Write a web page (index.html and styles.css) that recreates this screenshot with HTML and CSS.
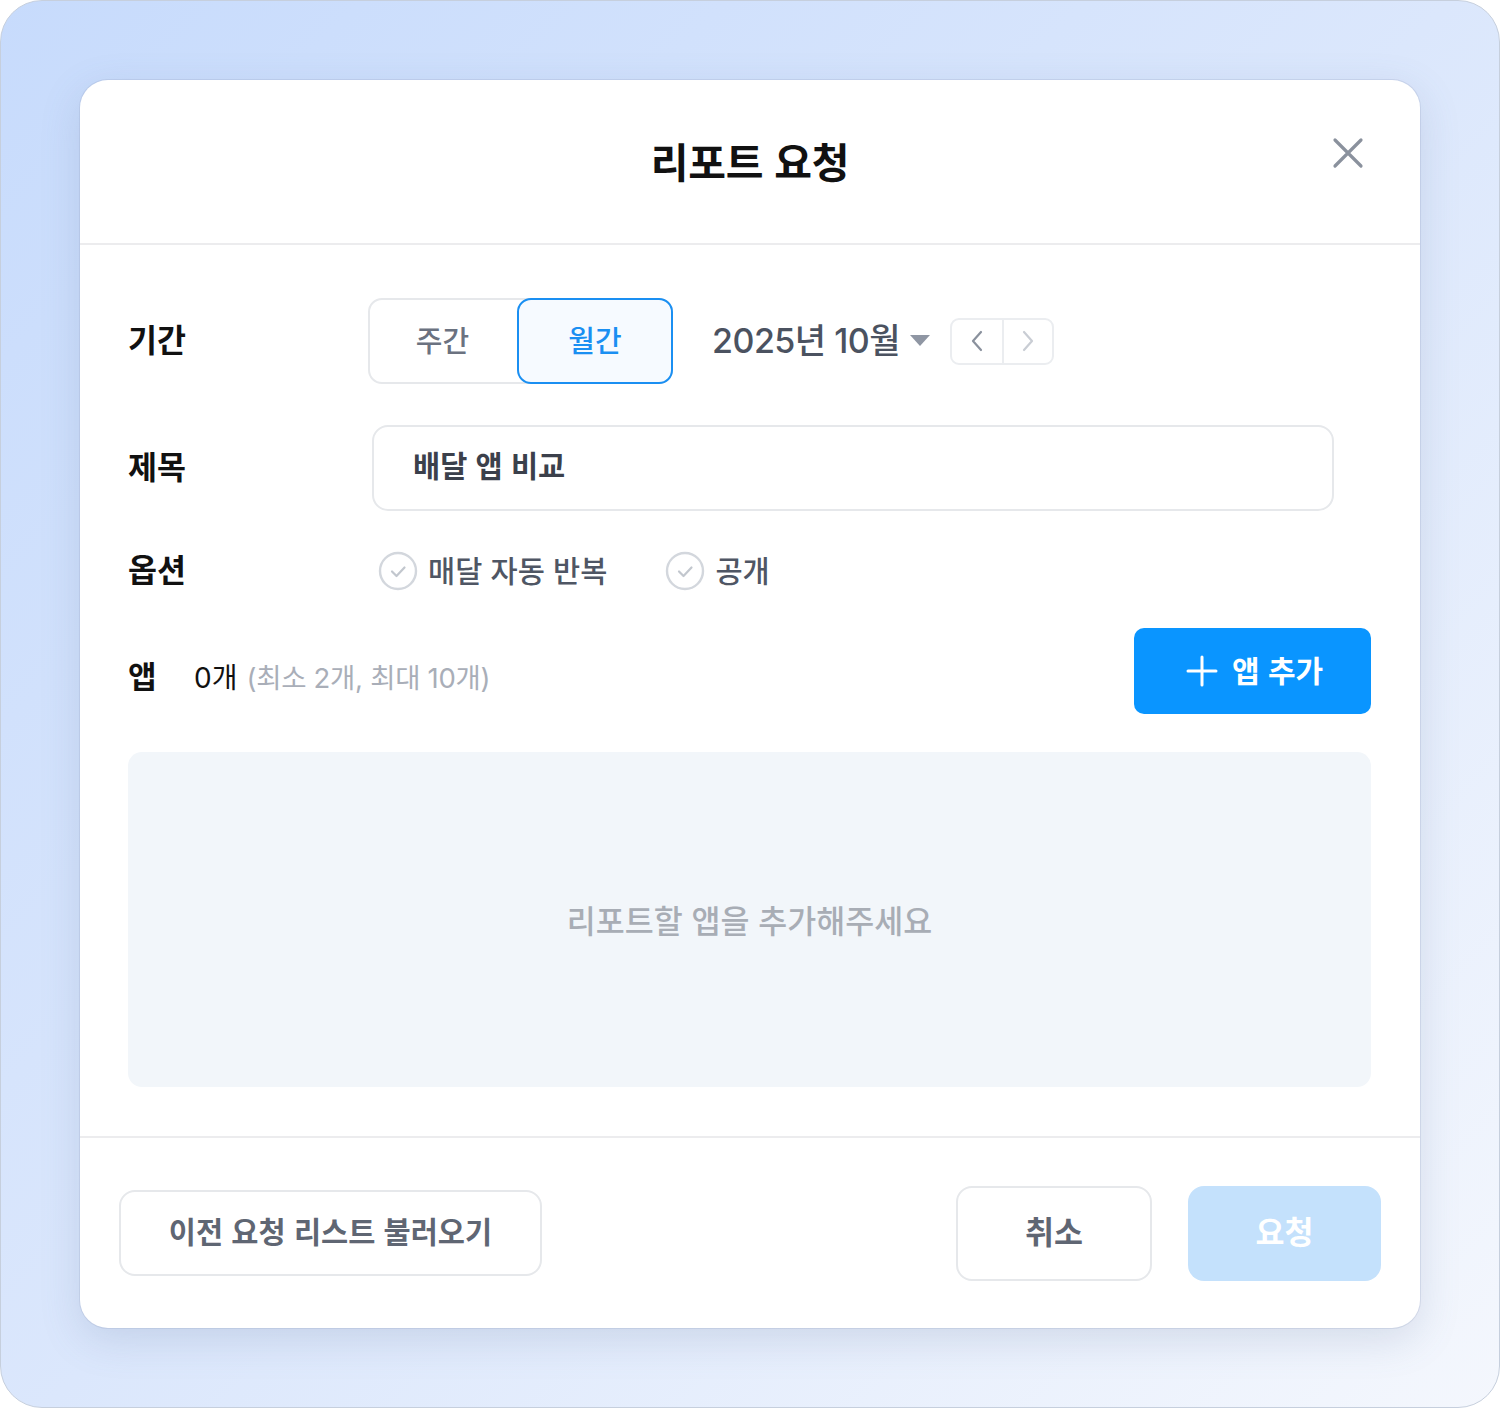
FILE: index.html
```html
<!DOCTYPE html>
<html lang="ko">
<head>
<meta charset="utf-8">
<title>리포트 요청</title>
<link rel="stylesheet" href="styles.css">
</head>
<body>
<div class="frame">
  <div class="modal">
    <header class="modal-header">
      <div></div>
      <h1 class="title">리포트 요청</h1>
      <button class="close" aria-label="닫기">
        <svg width="34" height="34" viewBox="0 0 34 34"><path d="M4 4 L30 30 M30 4 L4 30" stroke="#8a919d" stroke-width="3.2" stroke-linecap="round" fill="none"/></svg>
      </button>
    </header>

    <section class="modal-body">
      <div class="row row-period">
        <div class="label">기간</div>
        <div class="segment">
          <button class="seg-btn">주간</button>
          <button class="seg-btn active">월간</button>
        </div>
        <div class="date-picker">
          <span class="date-text">2025년 10월</span>
          <svg class="caret" width="20" height="11" viewBox="0 0 20 11"><path d="M0 0 H20 L10 11 Z" fill="#8f96a3"/></svg>
        </div>
        <div class="pager">
          <button class="pg-btn">
            <svg width="14" height="22" viewBox="0 0 14 22"><path d="M11 2 L3 11 L11 20" stroke="#8a919d" stroke-width="2.2" fill="none" stroke-linecap="round" stroke-linejoin="round"/></svg>
          </button>
          <button class="pg-btn">
            <svg width="14" height="22" viewBox="0 0 14 22"><path d="M3 2 L11 11 L3 20" stroke="#c9cdd4" stroke-width="2.2" fill="none" stroke-linecap="round" stroke-linejoin="round"/></svg>
          </button>
        </div>
      </div>

      <div class="row row-title">
        <div class="label">제목</div>
        <div class="input">배달 앱 비교</div>
      </div>

      <div class="row row-option">
        <div class="label">옵션</div>
        <label class="check">
          <svg width="40" height="40" viewBox="0 0 40 40"><circle cx="20" cy="20" r="18" stroke="#d3d7dd" stroke-width="2.4" fill="#fff"/><path d="M14 20.5 L18.5 25 L26.5 16.5" stroke="#c2c7ce" stroke-width="2.2" fill="none" stroke-linecap="round" stroke-linejoin="round"/></svg>
          <span>매달 자동 반복</span>
        </label>
        <label class="check">
          <svg width="40" height="40" viewBox="0 0 40 40"><circle cx="20" cy="20" r="18" stroke="#d3d7dd" stroke-width="2.4" fill="#fff"/><path d="M14 20.5 L18.5 25 L26.5 16.5" stroke="#c2c7ce" stroke-width="2.2" fill="none" stroke-linecap="round" stroke-linejoin="round"/></svg>
          <span>공개</span>
        </label>
      </div>

      <div class="row row-apps">
        <div class="apps-info">
          <span class="label-inline">앱</span>
          <span class="count">0개</span>
          <span class="limit">(최소 2개, 최대 10개)</span>
        </div>
        <button class="add-btn">
          <svg width="32" height="32" viewBox="0 0 32 32"><path d="M16 2 V30 M2 16 H30" stroke="#fff" stroke-width="3" stroke-linecap="round"/></svg>
          <span>앱 추가</span>
        </button>
      </div>

      <div class="empty">리포트할 앱을 추가해주세요</div>
    </section>

    <footer class="modal-footer">
      <button class="btn btn-history">이전 요청 리스트 불러오기</button>
      <div class="actions">
        <button class="btn btn-cancel">취소</button>
        <button class="btn btn-submit">요청</button>
      </div>
    </footer>
  </div>
</div>
</body>
</html>
```

FILE: styles.css
```css
* { box-sizing: border-box; }
html, body { margin: 0; padding: 0; }
body {
  width: 1500px;
  height: 1408px;
  font-family: "Inter", "Noto Sans CJK KR", sans-serif;
  background: #ffffff;
  line-height: 1.2;
}
button {
  font-family: inherit;
  line-height: 1.2;
  border: none;
  background: none;
  padding: 0;
  cursor: pointer;
}
.frame {
  width: 1500px;
  height: 1408px;
  border: 1px solid #c6cfdd;
  border-radius: 42px;
  background: linear-gradient(135deg, #c7dbfc 0%, #dbe7fc 50%, #f4f7fd 100%);
  padding: 79px;
}
.modal {
  width: 1340px;
  height: 1248px;
  background: #fff;
  border-radius: 28px;
  box-shadow: 0 0 0 1px rgba(150, 165, 195, 0.25), 0 12px 40px rgba(90, 110, 150, 0.18);
  display: flex;
  flex-direction: column;
  overflow: hidden;
}
.modal-header {
  flex-shrink: 0;
  height: 165px;
  border-bottom: 2px solid #ececee;
  display: grid;
  grid-template-columns: 1fr auto 1fr;
  align-items: center;
}
.title {
  margin: 0;
  padding-bottom: 2px;
  font-family: "Noto Sans CJK KR", sans-serif;
  font-size: 41px;
  font-weight: 700;
  color: #111;
  letter-spacing: -0.3px;
}
.close {
  justify-self: end;
  margin-right: 55px;
  margin-bottom: 18px;
  width: 34px;
  height: 34px;
  display: flex;
}
.modal-body {
  flex: 1;
  min-height: 0;
  padding: 53px 49px 49px 48px;
  display: flex;
  flex-direction: column;
  border-bottom: 2px solid #ececee;
}
.row {
  display: flex;
  align-items: center;
  flex-shrink: 0;
}
.label {
  width: 240px;
  flex-shrink: 0;
  padding-bottom: 4px;
  font-family: "Noto Sans CJK KR", sans-serif;
  font-size: 31.5px;
  font-weight: 700;
  color: #111;
}
.segment {
  display: flex;
  height: 86px;
  width: 305px;
  border: 2px solid #e6e8eb;
  border-radius: 14px;
}
.seg-btn {
  font-family: "Noto Sans CJK KR", sans-serif;
  font-size: 29px;
  font-weight: 500;
  color: #6b7280;
  width: 149px;
  margin: -2px 0 -2px -2px;
  padding-bottom: 4px;
}
.seg-btn.active {
  width: 156px;
  margin: -2px -2px -2px 0;
  border: 2px solid #1a8ff2;
  border-radius: 14px;
  background: #f6faff;
  color: #1a8ff2;
}
.date-picker {
  display: flex;
  align-items: center;
  margin-left: 39px;
}
.date-text {
  font-family: "Inter", "Noto Sans CJK KR", sans-serif;
  font-size: 34px;
  font-weight: 500;
  color: #4b5260;
  letter-spacing: -0.5px;
}
.caret { margin-left: 10px; }
.pager {
  display: flex;
  margin-left: 20px;
  height: 47px;
  border: 2px solid #ebedf0;
  border-radius: 9px;
}
.pg-btn {
  width: 50px;
  display: flex;
  align-items: center;
  justify-content: center;
}
.pg-btn + .pg-btn { border-left: 2px solid #ebedf0; }

.row-title { margin-top: 41px; }
.input {
  margin-left: 4px;
  width: 962px;
  height: 86px;
  border: 2px solid #e6e8eb;
  border-radius: 16px;
  display: flex;
  align-items: center;
  padding-left: 39px;
  padding-bottom: 6px;
  font-family: "Noto Sans CJK KR", sans-serif;
  font-size: 29.5px;
  font-weight: 700;
  color: #3b404b;
}
.row-option { margin-top: 39px; }
.check {
  display: flex;
  align-items: center;
  gap: 10px;
  margin-left: 10px;
  font-family: "Noto Sans CJK KR", sans-serif;
  font-size: 29.5px;
  font-weight: 500;
  color: #4f5664;
}
.check span { padding-bottom: 3px; }
.check + .check { margin-left: 58px; }
.row-apps {
  margin-top: 36px;
  justify-content: space-between;
}
.apps-info {
  display: flex;
  align-items: baseline;
  margin-top: 9px;
  font-family: "Noto Sans CJK KR", sans-serif;
}
.label-inline {
  font-size: 31px;
  font-weight: 700;
  color: #111;
  width: 66px;
}
.count {
  font-family: "Inter", "Noto Sans CJK KR", sans-serif;
  font-size: 28px;
  color: #111;
  margin-right: 9px;
}
.limit {
  font-family: "Inter", "Noto Sans CJK KR", sans-serif;
  font-size: 27.5px;
  color: #a9aeb8;
  letter-spacing: -0.3px;
}
.add-btn {
  width: 237px;
  height: 86px;
  background: #0a95ff;
  border-radius: 10px;
  color: #fff;
  display: flex;
  align-items: center;
  justify-content: center;
  gap: 14px;
  padding-left: 4px;
  font-family: "Noto Sans CJK KR", sans-serif;
  font-size: 30px;
  font-weight: 700;
}
.add-btn span { padding-bottom: 4px; }
.empty {
  margin-top: 38px;
  flex: 1;
  background: #f2f6fa;
  border-radius: 14px;
  display: flex;
  align-items: center;
  justify-content: center;
  padding-bottom: 0;
  font-family: "Noto Sans CJK KR", sans-serif;
  font-size: 31.5px;
  font-weight: 500;
  color: #a8adb5;
}
.modal-footer {
  flex-shrink: 0;
  height: 190px;
  display: flex;
  align-items: center;
  justify-content: space-between;
  padding: 0 39px;
}
.btn {
  font-family: "Noto Sans CJK KR", sans-serif;
  font-weight: 700;
  border-radius: 16px;
  padding-bottom: 4px;
}
.btn-history {
  width: 423px;
  height: 86px;
  border: 2px solid #e6e8eb;
  color: #5f6673;
  background: #fff;
  font-size: 29.5px;
}
.actions {
  display: flex;
  gap: 36px;
}
.btn-cancel {
  width: 196px;
  height: 95px;
  border: 2px solid #e6e8eb;
  color: #5f6673;
  background: #fff;
  font-size: 31.5px;
}
.btn-submit {
  width: 193px;
  height: 95px;
  background: #c4e1fc;
  color: #fff;
  font-size: 31.5px;
}
```
